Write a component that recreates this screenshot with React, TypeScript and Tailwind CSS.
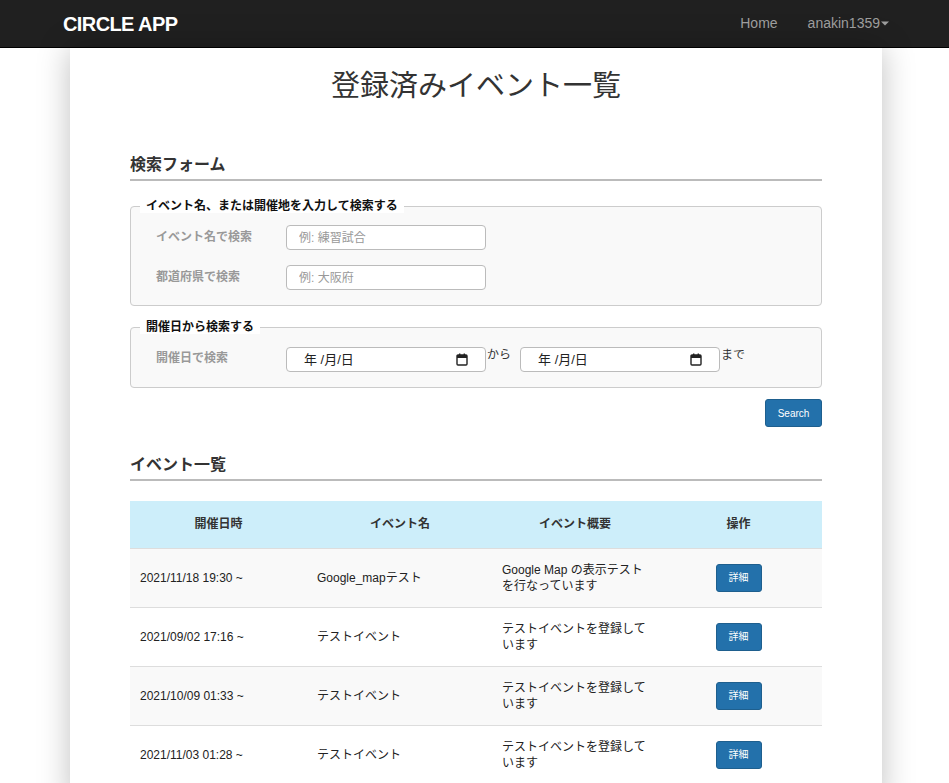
import React from "react";

const font = { fontFamily: '"Liberation Sans", "Noto Sans CJK JP", sans-serif' };

function CalIcon() {
  return (
    <svg width="12" height="13" viewBox="0 0 12 13" className="shrink-0">
      <rect x="1" y="2" width="10" height="10" rx="1" fill="none" stroke="#222" strokeWidth="1.4" />
      <rect x="1" y="2" width="10" height="3" fill="#222" />
      <rect x="3" y="0.5" width="1.4" height="2.5" fill="#222" />
      <rect x="7.6" y="0.5" width="1.4" height="2.5" fill="#222" />
    </svg>
  );
}

function DateBox() {
  return (
    <div className="flex h-[25px] w-[200px] items-center justify-between rounded-[4px] border border-[#bbb] bg-white pl-[17px] pr-[17px] text-[13px] text-[#222]">
      <span>年 /月/日</span>
      <CalIcon />
    </div>
  );
}

const rows = [
  { d: "2021/11/18 19:30 ~", n: "Google_mapテスト", s: "Google Map の表示テストを行なっています" },
  { d: "2021/09/02 17:16 ~", n: "テストイベント", s: "テストイベントを登録しています" },
  { d: "2021/10/09 01:33 ~", n: "テストイベント", s: "テストイベントを登録しています" },
  { d: "2021/11/03 01:28 ~", n: "テストイベント", s: "テストイベントを登録しています" },
];

export default function App() {
  return (
    <div className="min-h-[783px] bg-white text-[#333]" style={font}>
      <nav className="flex h-[48px] items-center justify-between border-b border-black bg-[#202020] pl-[63px] pr-[60px]">
        <span className="text-[20px] font-bold tracking-[-0.6px] text-white">CIRCLE APP</span>
        <div className="flex items-center text-[14px] text-[#9d9d9d]">
          <span>Home</span>
          <span className="ml-[30px] flex items-center">
            anakin1359
            <svg width="8" height="5" viewBox="0 0 8 5" className="ml-[1px]">
              <path d="M0 0.5 L8 0.5 L4 4.5 Z" fill="#9d9d9d" />
            </svg>
          </span>
        </div>
      </nav>
      <div className="ml-[70px] w-[812px] bg-white px-[60px] pb-[20px] pt-[20px] shadow-[0_0_30px_rgba(0,0,0,0.25)]">
        <h1 className="text-center text-[29px] leading-[36px] text-[#333]">登録済みイベント一覧</h1>

        <h2 className="mt-[51px] border-b-2 border-[#bbb] pb-[4px] text-[16px] font-bold leading-[20px]">検索フォーム</h2>

        <fieldset className="mt-[18px] rounded-[4px] border border-[#ccc] bg-[#f9f9f9] pb-[15px] pl-[8px] pt-[12px]">
          <legend className="ml-[1px] bg-white px-[6px] text-[12px] font-bold leading-[14px] text-[#111]">
            イベント名、または開催地を入力して検索する
          </legend>
          <div className="pl-[17px]">
            <div className="flex items-start">
              <span className="w-[130px] pt-[3px] text-[12px] font-bold text-[#999]">イベント名で検索</span>
              <input className="h-[25px] w-[200px] rounded-[4px] border border-[#bbb] bg-white pl-[12px] text-[12px] outline-none placeholder:text-[#999]" placeholder="例: 練習試合" />
            </div>
            <div className="mt-[15px] flex items-start">
              <span className="w-[130px] pt-[3px] text-[12px] font-bold text-[#999]">都道府県で検索</span>
              <input className="h-[25px] w-[200px] rounded-[4px] border border-[#bbb] bg-white pl-[12px] text-[12px] outline-none placeholder:text-[#999]" placeholder="例: 大阪府" />
            </div>
          </div>
        </fieldset>

        <fieldset className="mt-[14px] rounded-[4px] border border-[#ccc] bg-[#f9f9f9] pb-[15px] pl-[8px] pt-[13px]">
          <legend className="ml-[1px] bg-white px-[6px] text-[12px] font-bold leading-[14px] text-[#111]">開催日から検索する</legend>
          <div className="flex items-start pl-[17px]">
            <span className="w-[130px] pt-[2px] text-[12px] font-bold text-[#999]">開催日で検索</span>
            <DateBox />
            <span className="ml-[1px] mr-[9px] text-[12px] leading-[16px]">から</span>
            <DateBox />
            <span className="ml-[1px] text-[12px] leading-[16px]">まで</span>
          </div>
        </fieldset>

        <div className="mt-[11px] flex justify-end">
          <button className="h-[28px] w-[57px] rounded-[3px] border border-[#1e5f8e] bg-[#2371ab] text-[10px] text-white">Search</button>
        </div>

        <h2 className="mt-[28px] border-b-2 border-[#bbb] pb-[4px] text-[16px] font-bold leading-[20px]">イベント一覧</h2>

        <table className="mt-[20px] w-full table-fixed border-collapse text-[12px]">
          <colgroup>
            <col className="w-[177px]" />
            <col className="w-[186px]" />
            <col className="w-[164px]" />
            <col className="w-[165px]" />
          </colgroup>
          <thead>
            <tr className="h-[47px] bg-[#cdeefa]">
              <th className="text-center font-bold">開催日時</th>
              <th className="text-center font-bold">イベント名</th>
              <th className="text-center font-bold">イベント概要</th>
              <th className="pr-[2px] text-center font-bold">操作</th>
            </tr>
          </thead>
          <tbody>
            {rows.map((r, i) => (
              <tr key={i} className={`h-[59px] border-t border-[#ddd] ${i % 2 === 0 ? "bg-[#f9f9f9]" : "bg-white"}`}>
                <td className="px-[10px] text-[#222]">{r.d}</td>
                <td className="px-[10px] text-[#222]">{r.n}</td>
                <td className="px-[9px] leading-[16px] text-[#222]">{r.s}</td>
                <td className="pr-[2px] text-center">
                  <button className="h-[28px] w-[46px] rounded-[3px] border border-[#1e5f8e] bg-[#2371ab] text-[10px] text-white">詳細</button>
                </td>
              </tr>
            ))}
          </tbody>
        </table>
      </div>
    </div>
  );
}
